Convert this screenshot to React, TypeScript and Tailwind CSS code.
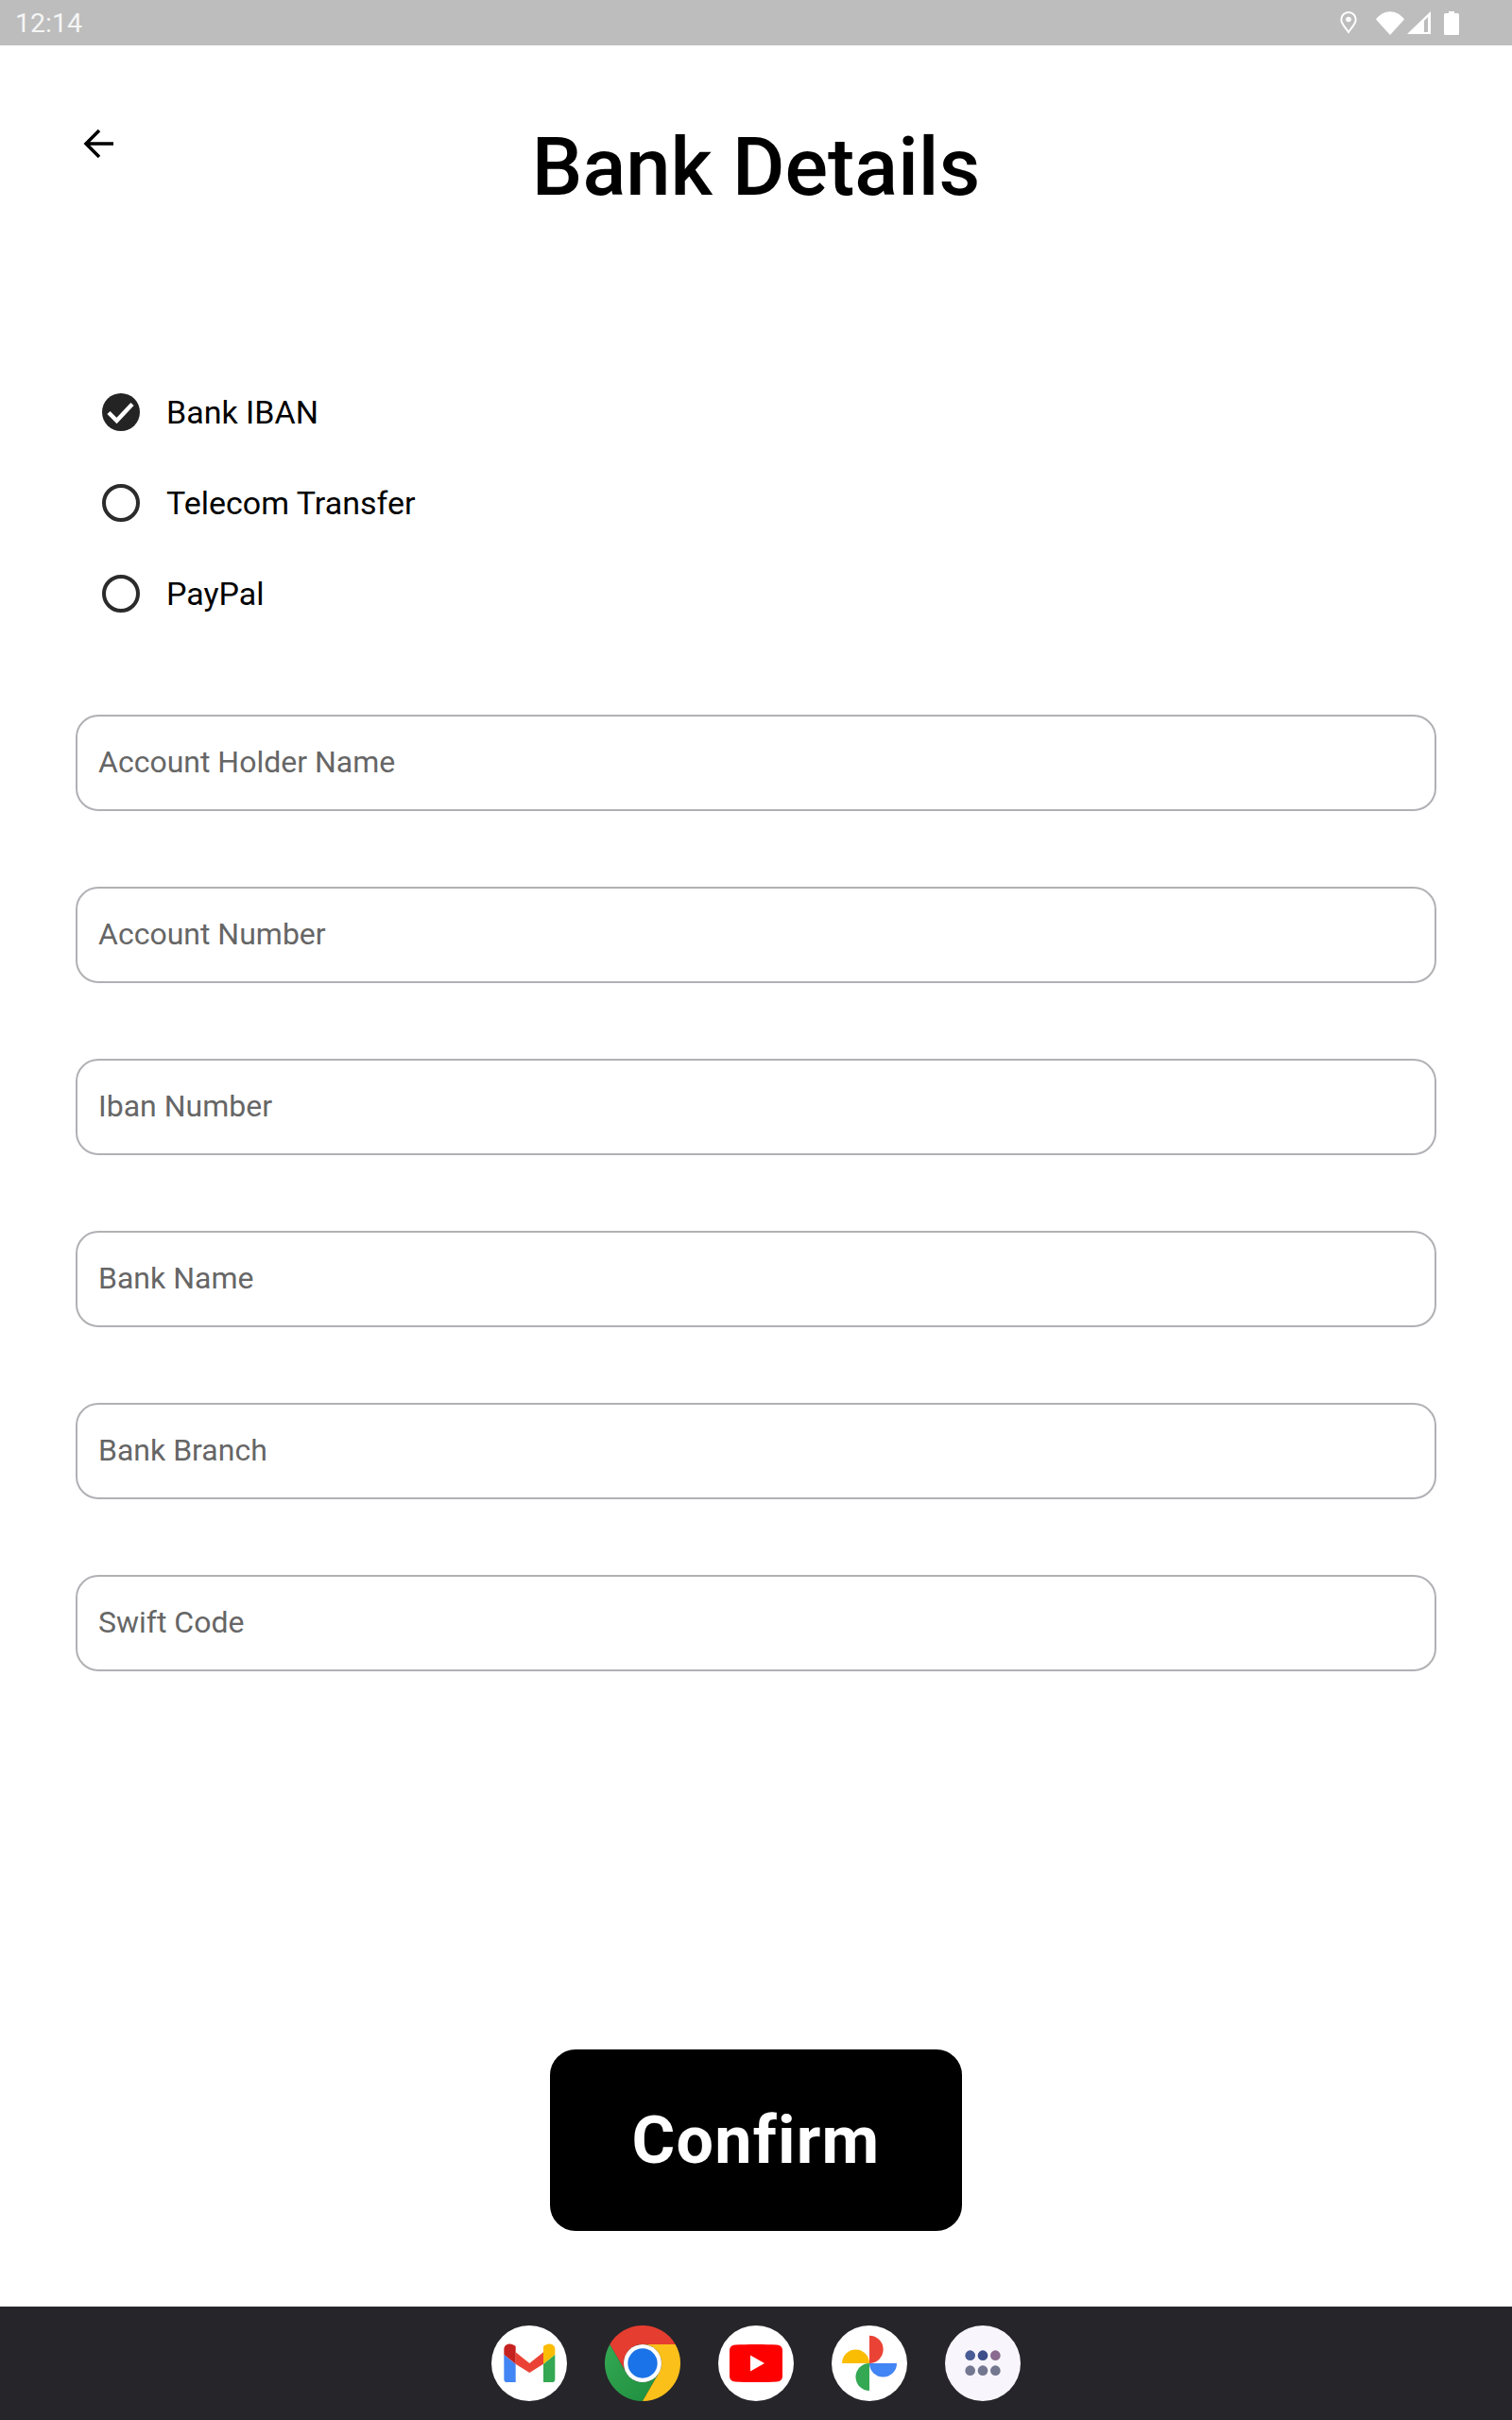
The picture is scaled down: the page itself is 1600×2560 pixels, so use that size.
const methods = ["Bank IBAN", "Telecom Transfer", "PayPal"];
const fields = [
  "Account Holder Name",
  "Account Number",
  "Iban Number",
  "Bank Name",
  "Bank Branch",
  "Swift Code",
];

function StatusIcons() {
  return (
    <div className="flex items-center">
      {/* location */}
      <svg width="18" height="24" viewBox="0 0 18 24" className="mr-5">
        <path
          d="M9 22C5 16.500 1.300 12.800 1.300 8.700a7.700 7.700 0 0 1 15.400 0C16.700 12.800 13 16.500 9 22z"
          fill="none"
          stroke="#fff"
          strokeWidth="2"
        />
        <circle cx="9" cy="8.500" r="2.800" fill="#fff" />
      </svg>
      {/* wifi */}
      <svg width="30" height="25" viewBox="0 0 30 25" className="mr-[3px]">
        <path d="M0 8.500C8 -2.500 22 -2.500 30 8.500L15 25z" fill="#fff" />
      </svg>
      {/* signal */}
      <svg width="25" height="24" viewBox="0 0 25 24" className="mr-[14px]">
        <path d="M25 0V24H0zM22 6L18 10V22H22z" fill="#fff" fillRule="evenodd" />
      </svg>
      {/* battery */}
      <svg width="16" height="25" viewBox="0 0 16 25">
        <path
          d="M5 0h6v2h3.500a1.500 1.500 0 0 1 1.500 1.500V23.500a1.500 1.500 0 0 1-1.500 1.500H1.500A1.500 1.500 0 0 1 0 23.500V3.500A1.500 1.500 0 0 1 1.500 2H5z"
          fill="#fff"
        />
      </svg>
    </div>
  );
}

function Radio({ checked }: { checked: boolean }) {
  if (checked) {
    return (
      <svg width="40" height="40" viewBox="0 0 40 40">
        <circle cx="20" cy="20" r="20" fill="#242424" />
        <path d="M7 20.500L15.500 29L32 11.500" fill="none" stroke="#fff" strokeWidth="4.500" />
      </svg>
    );
  }
  return <div className="w-10 h-10 rounded-full border-4 border-[#2b2b2b]" />;
}

function Gmail() {
  return (
    <svg viewBox="0 0 240 240" className="w-full h-full">
      <path d="M40 92L77 122V180H50Q40 180 40 170z" fill="#4285F4" />
      <path d="M202 92L165 122V180H192Q202 180 202 170z" fill="#34A853" />
      <path d="M77 85L121 120L165 85V122L121 150L77 122z" fill="#EA4335" />
      <path d="M40 92V75C40 58 62 52 77 66V122z" fill="#C5221F" />
      <path d="M202 92V75C202 58 180 52 165 66V122z" fill="#FBBC04" />
    </svg>
  );
}

function Chrome() {
  return (
    <svg viewBox="0 0 240 240" className="w-full h-full">
      <defs>
        <linearGradient id="chromeGreen" x1="0" y1="0" x2="1" y2="1">
          <stop offset="0" stopColor="#34A853" />
          <stop offset="1" stopColor="#1E8E3E" />
        </linearGradient>
      </defs>
      <path d="M16 60A120 120 0 0 1 224 60H120A60 60 0 0 0 68 150z" fill="#E53D2F" />
      <path d="M16 60A120 120 0 0 0 120 240L172 150A60 60 0 0 1 68 150z" fill="url(#chromeGreen)" />
      <path d="M224 60A120 120 0 0 1 120 240L172 150A60 60 0 0 0 120 60z" fill="#FCC01A" />
      <circle cx="120" cy="120" r="60" fill="#fff" />
      <circle cx="120" cy="120" r="47" fill="#1A73E8" />
    </svg>
  );
}

function YouTube() {
  return (
    <svg viewBox="0 0 80 80" className="w-full h-full">
      <path
        d="M18 20.500C30 19.800 50 19.800 62 20.500C66 20.800 68 23 68 27V53C68 57 66 59.200 62 59.500C50 60.200 30 60.200 18 59.500C14 59.200 12 57 12 53V27C12 23 14 20.800 18 20.500z"
        fill="#FF0000"
      />
      <path d="M34 31.500V48.500L49 40z" fill="#fff" />
    </svg>
  );
}

function Photos() {
  return (
    <svg viewBox="0 0 240 240" className="w-full h-full">
      <path d="M120 120V32A44 44 0 0 1 120 120z" fill="#EA4335" />
      <path d="M120 120H207A43.500 43.500 0 0 1 120 120z" fill="#4285F4" />
      <path d="M120 120V207A43.500 43.500 0 0 1 120 120z" fill="#34A853" />
      <path d="M120 120H33A43.500 43.500 0 0 1 120 120z" fill="#FBBC04" />
    </svg>
  );
}

function AppsGrid() {
  return (
    <svg viewBox="0 0 240 240" className="w-full h-full">
      <circle cx="80" cy="95" r="16" fill="#4A5C96" />
      <circle cx="120" cy="95" r="16" fill="#3D4E8B" />
      <circle cx="160" cy="95" r="16" fill="#8B6A8F" />
      <circle cx="80" cy="143" r="16" fill="#73778F" />
      <circle cx="120" cy="143" r="16" fill="#73778F" />
      <circle cx="160" cy="143" r="16" fill="#73778F" />
    </svg>
  );
}

export default function App() {
  return (
    <div className="h-[2560px] flex flex-col bg-white font-['Roboto',sans-serif]">
      {/* Status bar */}
      <div className="h-12 shrink-0 flex items-center justify-between bg-[#bdbdbd] pl-[16px] pr-[56px]">
        <span className="pt-[2px] text-[28.500px] leading-none text-[#f5f5f5]">12:14</span>
        <StatusIcons />
      </div>

      <div className="flex-1 flex flex-col px-20">
        {/* Header */}
        <div className="h-[340px] shrink-0 grid grid-cols-[1fr_auto_1fr]">
          <div className="pt-[88px] pl-2">
            <svg width="32" height="32" viewBox="0 0 32 32">
              <path d="M32 16H3M17 2L3 16L17 30" fill="none" stroke="#000" strokeWidth="3.500" />
            </svg>
          </div>
          <h1 className="pt-[82px] text-[85px] leading-[95px] font-medium text-black">Bank Details</h1>
        </div>

        {/* Payout method */}
        <div className="flex flex-col pl-7">
          {methods.map((m, i) => (
            <div key={m} className="h-24 flex items-center gap-7">
              <Radio checked={i === 0} />
              <span className="pt-[1px] text-[34px] text-black">{m}</span>
            </div>
          ))}
        </div>

        {/* Form */}
        <div className="mt-[80px] flex flex-col gap-[80px]">
          {fields.map((f) => (
            <div
              key={f}
              className="h-[102px] flex items-center px-[22px] pb-[2px] rounded-[24px] border-2 border-[#b1b1b5] text-[32px] text-[#666666]"
            >
              {f}
            </div>
          ))}
        </div>

        <div className="mt-auto mb-20 flex justify-center">
          <button className="w-[436px] h-[192px] rounded-[27px] bg-black text-white text-[70px] tracking-[1.200px] font-bold">
            Confirm
          </button>
        </div>
      </div>

      {/* Bottom dock */}
      <div className="h-[120px] shrink-0 flex items-center justify-center gap-10 bg-[#26252a]">
        <div className="w-20 h-20 rounded-full bg-white"><Gmail /></div>
        <div className="w-20 h-20 rounded-full"><Chrome /></div>
        <div className="w-20 h-20 rounded-full bg-white"><YouTube /></div>
        <div className="w-20 h-20 rounded-full bg-white"><Photos /></div>
        <div className="w-20 h-20 rounded-full bg-[#f8f6fc]"><AppsGrid /></div>
      </div>
    </div>
  );
}
